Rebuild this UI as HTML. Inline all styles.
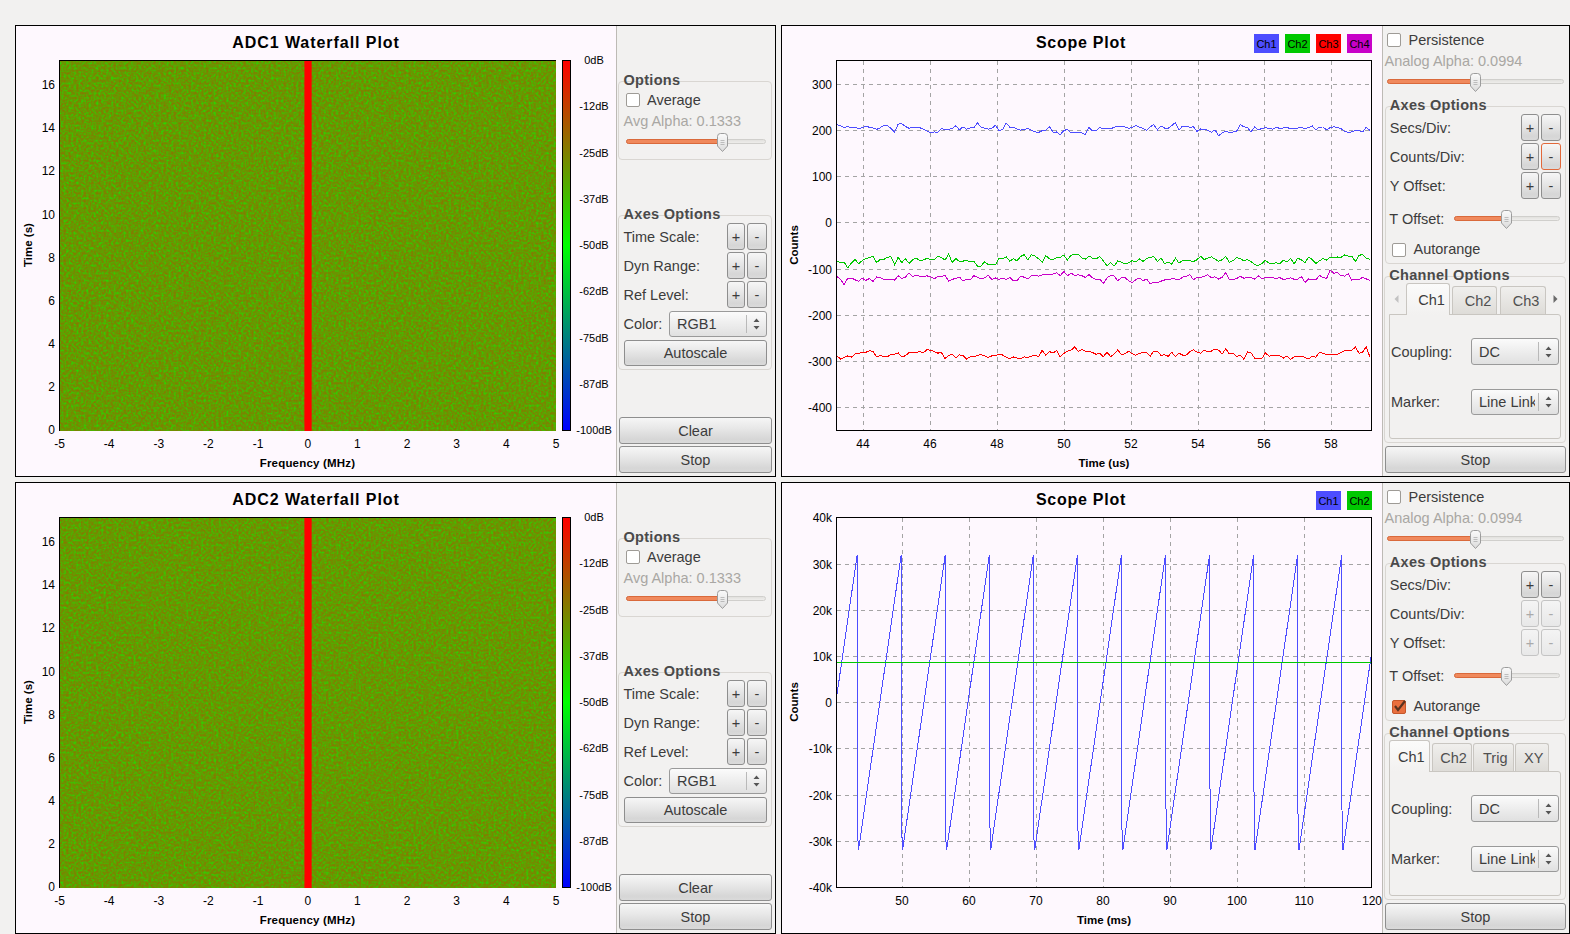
<!DOCTYPE html><html><head><meta charset="utf-8"><style>
html,body{margin:0;padding:0;}
body{width:1570px;height:934px;background:#f2f1f0;position:relative;overflow:hidden;font-family:"Liberation Sans", sans-serif;}
.t{position:absolute;height:40px;line-height:40px;white-space:pre;font-family:"Liberation Sans", sans-serif;}
</style></head><body>
<div style="position:absolute;left:15px;top:25px;width:761px;height:452px;border:1px solid #000;background:#fef8fe;box-sizing:border-box;"></div>
<div class="t" style="left:-184px;width:1000px;text-align:center;top:22.799999999999997px;font-size:16px;font-weight:bold;color:#000;letter-spacing:0.95px;">ADC1 Waterfall Plot</div>
<svg style="position:absolute;left:59px;top:60px" width="497" height="371"><defs><filter id="nz0" x="0" y="0" width="100%" height="100%" color-interpolation-filters="sRGB"><feTurbulence type="fractalNoise" baseFrequency="0.4" numOctaves="3" seed="3"/><feComponentTransfer><feFuncR type="table" tableValues="0.45 0.46 0.48 0.51 0.55 0.60 0.66 0.73 0.80 0.86 0.9"/></feComponentTransfer><feColorMatrix type="matrix" values="-1 0 0 0 1  1 0 0 0 0  0 0 0 0 0  0 0 0 0 1"/></filter></defs><rect width="497" height="371" fill="#6f9a00" filter="url(#nz0)"/></svg>
<div style="position:absolute;left:59px;top:60px;width:1px;height:371px;background:#000;"></div>
<div style="position:absolute;left:59px;top:60px;width:497px;height:1px;background:#000;"></div>
<div style="position:absolute;left:305px;top:61px;width:6px;height:370px;background:#ff0000;"></div>
<div style="position:absolute;left:304px;top:61px;width:1px;height:370px;background:rgba(255,0,0,0.6);"></div>
<div style="position:absolute;left:311px;top:61px;width:1px;height:370px;background:rgba(255,0,0,0.65);"></div>
<div style="position:absolute;left:562px;top:60px;width:9px;height:371px;border:1px solid #000;box-sizing:border-box;background:linear-gradient(#f00,#0f0 50%,#00f);"></div>
<div class="t" style="left:94px;width:1000px;text-align:center;top:40.0px;font-size:11px;font-weight:normal;color:#000;">0dB</div>
<div class="t" style="left:94px;width:1000px;text-align:center;top:86.25px;font-size:11px;font-weight:normal;color:#000;">-12dB</div>
<div class="t" style="left:94px;width:1000px;text-align:center;top:132.5px;font-size:11px;font-weight:normal;color:#000;">-25dB</div>
<div class="t" style="left:94px;width:1000px;text-align:center;top:178.75px;font-size:11px;font-weight:normal;color:#000;">-37dB</div>
<div class="t" style="left:94px;width:1000px;text-align:center;top:225.0px;font-size:11px;font-weight:normal;color:#000;">-50dB</div>
<div class="t" style="left:94px;width:1000px;text-align:center;top:271.25px;font-size:11px;font-weight:normal;color:#000;">-62dB</div>
<div class="t" style="left:94px;width:1000px;text-align:center;top:317.5px;font-size:11px;font-weight:normal;color:#000;">-75dB</div>
<div class="t" style="left:94px;width:1000px;text-align:center;top:363.75px;font-size:11px;font-weight:normal;color:#000;">-87dB</div>
<div class="t" style="left:94px;width:1000px;text-align:center;top:410.0px;font-size:11px;font-weight:normal;color:#000;">-100dB</div>
<div class="t" style="left:-945px;width:1000px;text-align:right;top:410.0px;font-size:12px;font-weight:normal;color:#000;">0</div>
<div class="t" style="left:-945px;width:1000px;text-align:right;top:366.9px;font-size:12px;font-weight:normal;color:#000;">2</div>
<div class="t" style="left:-945px;width:1000px;text-align:right;top:323.8px;font-size:12px;font-weight:normal;color:#000;">4</div>
<div class="t" style="left:-945px;width:1000px;text-align:right;top:280.7px;font-size:12px;font-weight:normal;color:#000;">6</div>
<div class="t" style="left:-945px;width:1000px;text-align:right;top:237.60000000000002px;font-size:12px;font-weight:normal;color:#000;">8</div>
<div class="t" style="left:-945px;width:1000px;text-align:right;top:194.5px;font-size:12px;font-weight:normal;color:#000;">10</div>
<div class="t" style="left:-945px;width:1000px;text-align:right;top:151.39999999999998px;font-size:12px;font-weight:normal;color:#000;">12</div>
<div class="t" style="left:-945px;width:1000px;text-align:right;top:108.30000000000001px;font-size:12px;font-weight:normal;color:#000;">14</div>
<div class="t" style="left:-945px;width:1000px;text-align:right;top:65.19999999999999px;font-size:12px;font-weight:normal;color:#000;">16</div>
<div class="t" style="left:-440.5px;width:1000px;text-align:center;top:424.0px;font-size:12px;font-weight:normal;color:#000;">-5</div>
<div class="t" style="left:-390.85px;width:1000px;text-align:center;top:424.0px;font-size:12px;font-weight:normal;color:#000;">-4</div>
<div class="t" style="left:-341.2px;width:1000px;text-align:center;top:424.0px;font-size:12px;font-weight:normal;color:#000;">-3</div>
<div class="t" style="left:-291.55px;width:1000px;text-align:center;top:424.0px;font-size:12px;font-weight:normal;color:#000;">-2</div>
<div class="t" style="left:-241.89999999999998px;width:1000px;text-align:center;top:424.0px;font-size:12px;font-weight:normal;color:#000;">-1</div>
<div class="t" style="left:-192.25px;width:1000px;text-align:center;top:424.0px;font-size:12px;font-weight:normal;color:#000;">0</div>
<div class="t" style="left:-142.60000000000002px;width:1000px;text-align:center;top:424.0px;font-size:12px;font-weight:normal;color:#000;">1</div>
<div class="t" style="left:-92.94999999999999px;width:1000px;text-align:center;top:424.0px;font-size:12px;font-weight:normal;color:#000;">2</div>
<div class="t" style="left:-43.30000000000001px;width:1000px;text-align:center;top:424.0px;font-size:12px;font-weight:normal;color:#000;">3</div>
<div class="t" style="left:6.349999999999966px;width:1000px;text-align:center;top:424.0px;font-size:12px;font-weight:normal;color:#000;">4</div>
<div class="t" style="left:56.0px;width:1000px;text-align:center;top:424.0px;font-size:12px;font-weight:normal;color:#000;">5</div>
<div class="t" style="left:-192.5px;width:1000px;text-align:center;top:443.0px;font-size:11.5px;font-weight:bold;color:#000;letter-spacing:0.2px;">Frequency (MHz)</div>
<div class="t" style="left:-472px;width:1000px;text-align:center;top:225.0px;font-size:11.5px;font-weight:bold;color:#000;transform:rotate(-90deg);">Time (s)</div>
<div style="position:absolute;left:616px;top:26px;width:159px;height:450px;background:#f2f1f0;border-left:1px solid #bdbab5;box-sizing:border-box;"></div>
<div style="position:absolute;left:618px;top:81px;width:152px;height:77px;border:1px solid #d9d6d2;border-radius:4px;"></div>
<div class="t" style="left:623.5px;top:60.0px;font-size:14.5px;font-weight:bold;color:#4a4a4a;letter-spacing:0.3px;">Options</div>
<div style="position:absolute;left:626px;top:93px;width:12px;height:12px;border:1px solid #9e9b96;border-radius:2px;background:#fff;"></div>
<div class="t" style="left:647px;top:80.0px;font-size:14.5px;font-weight:normal;color:#3c3c3c;">Average</div>
<div class="t" style="left:623.5px;top:101.0px;font-size:14.5px;font-weight:normal;color:#a9a7a3;">Avg Alpha: 0.1333</div>
<div style="position:absolute;left:626px;top:139px;width:138px;height:3px;border:1px solid #d0cfcc;border-radius:3px;background:linear-gradient(#e2e1de,#eeedeb);"></div>
<div style="position:absolute;left:626px;top:139px;width:93.5px;height:3px;border:1px solid #d9693b;border-radius:3px;background:#f0895c;"></div>
<svg style="position:absolute;left:715.5px;top:132px" width="13" height="21"><defs><linearGradient id="hg" x1="0" y1="0" x2="0" y2="1"><stop offset="0" stop-color="#fafafa"/><stop offset="1" stop-color="#dcdcdc"/></linearGradient></defs><path d="M1.5 4.5 Q1.5 1.5 4.5 1.5 L8.5 1.5 Q11.5 1.5 11.5 4.5 L11.5 14 L6.5 19.5 L1.5 14 Z" fill="url(#hg)" stroke="#9c9c9c"/><path d="M4.5 8.5h4M4.5 10.5h4M4.5 12.5h4" stroke="#a8a8a8" stroke-width="0.7"/></svg>
<div style="position:absolute;left:618px;top:215px;width:152px;height:153px;border:1px solid #d9d6d2;border-radius:4px;"></div>
<div class="t" style="left:623.5px;top:194.0px;font-size:14.5px;font-weight:bold;color:#4a4a4a;letter-spacing:0.3px;">Axes Options</div>
<div class="t" style="left:623.5px;top:216.5px;font-size:14.5px;font-weight:normal;color:#3c3c3c;">Time Scale:</div>
<div style="position:absolute;left:727px;top:223.0px;width:16px;height:25px;border:1px solid #8e8e8e;border-radius:3px;background:linear-gradient(#f6f6f6,#e8e8e8 40%,#d6d6d6 85%,#dadada);"></div>
<div class="t" style="left:236.0px;width:1000px;text-align:center;top:216.5px;font-size:14.5px;font-weight:normal;color:#3c3c3c;">+</div>
<div style="position:absolute;left:747px;top:223.0px;width:18px;height:25px;border:1px solid #8e8e8e;border-radius:3px;background:linear-gradient(#f6f6f6,#e8e8e8 40%,#d6d6d6 85%,#dadada);"></div>
<div class="t" style="left:257.0px;width:1000px;text-align:center;top:216.5px;font-size:14.5px;font-weight:normal;color:#3c3c3c;">-</div>
<div class="t" style="left:623.5px;top:245.7px;font-size:14.5px;font-weight:normal;color:#3c3c3c;">Dyn Range:</div>
<div style="position:absolute;left:727px;top:252.2px;width:16px;height:25px;border:1px solid #8e8e8e;border-radius:3px;background:linear-gradient(#f6f6f6,#e8e8e8 40%,#d6d6d6 85%,#dadada);"></div>
<div class="t" style="left:236.0px;width:1000px;text-align:center;top:245.7px;font-size:14.5px;font-weight:normal;color:#3c3c3c;">+</div>
<div style="position:absolute;left:747px;top:252.2px;width:18px;height:25px;border:1px solid #8e8e8e;border-radius:3px;background:linear-gradient(#f6f6f6,#e8e8e8 40%,#d6d6d6 85%,#dadada);"></div>
<div class="t" style="left:257.0px;width:1000px;text-align:center;top:245.7px;font-size:14.5px;font-weight:normal;color:#3c3c3c;">-</div>
<div class="t" style="left:623.5px;top:274.9px;font-size:14.5px;font-weight:normal;color:#3c3c3c;">Ref Level:</div>
<div style="position:absolute;left:727px;top:281.4px;width:16px;height:25px;border:1px solid #8e8e8e;border-radius:3px;background:linear-gradient(#f6f6f6,#e8e8e8 40%,#d6d6d6 85%,#dadada);"></div>
<div class="t" style="left:236.0px;width:1000px;text-align:center;top:274.9px;font-size:14.5px;font-weight:normal;color:#3c3c3c;">+</div>
<div style="position:absolute;left:747px;top:281.4px;width:18px;height:25px;border:1px solid #8e8e8e;border-radius:3px;background:linear-gradient(#f6f6f6,#e8e8e8 40%,#d6d6d6 85%,#dadada);"></div>
<div class="t" style="left:257.0px;width:1000px;text-align:center;top:274.9px;font-size:14.5px;font-weight:normal;color:#3c3c3c;">-</div>
<div class="t" style="left:623.5px;top:303.6px;font-size:14.5px;font-weight:normal;color:#3c3c3c;">Color:</div>
<div style="position:absolute;left:669px;top:311px;width:96px;height:24px;border:1px solid #9a9a9a;border-radius:3px;background:linear-gradient(#fbfbfb,#f0f0f0 40%,#e0e0e0);"></div>
<div class="t" style="left:677px;top:303.6px;font-size:14.5px;font-weight:normal;color:#3c3c3c;">RGB1</div>
<div style="position:absolute;left:746px;top:315px;width:1px;height:18px;background:#b9b9b9;"></div>
<svg style="position:absolute;left:753px;top:316.0px" width="10" height="16"><path d="M0.5 6 L3.5 2.5 L6.5 6 Z M0.5 10 L3.5 13.5 L6.5 10 Z" fill="#555"/></svg>
<div style="position:absolute;left:624px;top:340px;width:141px;height:24px;border:1px solid #8e8e8e;border-radius:3px;background:linear-gradient(#f6f6f6,#e8e8e8 40%,#d6d6d6 85%,#dadada);"></div>
<div class="t" style="left:195.5px;width:1000px;text-align:center;top:333.0px;font-size:14.5px;font-weight:normal;color:#3c3c3c;">Autoscale</div>
<div style="position:absolute;left:619px;top:417px;width:151px;height:25px;border:1px solid #8e8e8e;border-radius:3px;background:linear-gradient(#f6f6f6,#e8e8e8 40%,#d6d6d6 85%,#dadada);"></div>
<div class="t" style="left:195.5px;width:1000px;text-align:center;top:410.5px;font-size:14.5px;font-weight:normal;color:#3c3c3c;">Clear</div>
<div style="position:absolute;left:619px;top:446px;width:151px;height:25px;border:1px solid #8e8e8e;border-radius:3px;background:linear-gradient(#f6f6f6,#e8e8e8 40%,#d6d6d6 85%,#dadada);"></div>
<div class="t" style="left:195.5px;width:1000px;text-align:center;top:439.5px;font-size:14.5px;font-weight:normal;color:#3c3c3c;">Stop</div>
<div style="position:absolute;left:775px;top:25px;width:1px;height:452px;background:#000;"></div>
<div style="position:absolute;left:15px;top:482px;width:761px;height:452px;border:1px solid #000;background:#fef8fe;box-sizing:border-box;"></div>
<div class="t" style="left:-184px;width:1000px;text-align:center;top:479.8px;font-size:16px;font-weight:bold;color:#000;letter-spacing:0.95px;">ADC2 Waterfall Plot</div>
<svg style="position:absolute;left:59px;top:517px" width="497" height="371"><defs><filter id="nz457" x="0" y="0" width="100%" height="100%" color-interpolation-filters="sRGB"><feTurbulence type="fractalNoise" baseFrequency="0.4" numOctaves="3" seed="460"/><feComponentTransfer><feFuncR type="table" tableValues="0.45 0.46 0.48 0.51 0.55 0.60 0.66 0.73 0.80 0.86 0.9"/></feComponentTransfer><feColorMatrix type="matrix" values="-1 0 0 0 1  1 0 0 0 0  0 0 0 0 0  0 0 0 0 1"/></filter></defs><rect width="497" height="371" fill="#6f9a00" filter="url(#nz457)"/></svg>
<div style="position:absolute;left:59px;top:517px;width:1px;height:371px;background:#000;"></div>
<div style="position:absolute;left:59px;top:517px;width:497px;height:1px;background:#000;"></div>
<div style="position:absolute;left:305px;top:518px;width:6px;height:370px;background:#ff0000;"></div>
<div style="position:absolute;left:304px;top:518px;width:1px;height:370px;background:rgba(255,0,0,0.6);"></div>
<div style="position:absolute;left:311px;top:518px;width:1px;height:370px;background:rgba(255,0,0,0.65);"></div>
<div style="position:absolute;left:562px;top:517px;width:9px;height:371px;border:1px solid #000;box-sizing:border-box;background:linear-gradient(#f00,#0f0 50%,#00f);"></div>
<div class="t" style="left:94px;width:1000px;text-align:center;top:497.0px;font-size:11px;font-weight:normal;color:#000;">0dB</div>
<div class="t" style="left:94px;width:1000px;text-align:center;top:543.25px;font-size:11px;font-weight:normal;color:#000;">-12dB</div>
<div class="t" style="left:94px;width:1000px;text-align:center;top:589.5px;font-size:11px;font-weight:normal;color:#000;">-25dB</div>
<div class="t" style="left:94px;width:1000px;text-align:center;top:635.75px;font-size:11px;font-weight:normal;color:#000;">-37dB</div>
<div class="t" style="left:94px;width:1000px;text-align:center;top:682.0px;font-size:11px;font-weight:normal;color:#000;">-50dB</div>
<div class="t" style="left:94px;width:1000px;text-align:center;top:728.25px;font-size:11px;font-weight:normal;color:#000;">-62dB</div>
<div class="t" style="left:94px;width:1000px;text-align:center;top:774.5px;font-size:11px;font-weight:normal;color:#000;">-75dB</div>
<div class="t" style="left:94px;width:1000px;text-align:center;top:820.75px;font-size:11px;font-weight:normal;color:#000;">-87dB</div>
<div class="t" style="left:94px;width:1000px;text-align:center;top:867.0px;font-size:11px;font-weight:normal;color:#000;">-100dB</div>
<div class="t" style="left:-945px;width:1000px;text-align:right;top:867.0px;font-size:12px;font-weight:normal;color:#000;">0</div>
<div class="t" style="left:-945px;width:1000px;text-align:right;top:823.9px;font-size:12px;font-weight:normal;color:#000;">2</div>
<div class="t" style="left:-945px;width:1000px;text-align:right;top:780.8px;font-size:12px;font-weight:normal;color:#000;">4</div>
<div class="t" style="left:-945px;width:1000px;text-align:right;top:737.7px;font-size:12px;font-weight:normal;color:#000;">6</div>
<div class="t" style="left:-945px;width:1000px;text-align:right;top:694.6px;font-size:12px;font-weight:normal;color:#000;">8</div>
<div class="t" style="left:-945px;width:1000px;text-align:right;top:651.5px;font-size:12px;font-weight:normal;color:#000;">10</div>
<div class="t" style="left:-945px;width:1000px;text-align:right;top:608.4px;font-size:12px;font-weight:normal;color:#000;">12</div>
<div class="t" style="left:-945px;width:1000px;text-align:right;top:565.3px;font-size:12px;font-weight:normal;color:#000;">14</div>
<div class="t" style="left:-945px;width:1000px;text-align:right;top:522.2px;font-size:12px;font-weight:normal;color:#000;">16</div>
<div class="t" style="left:-440.5px;width:1000px;text-align:center;top:881.0px;font-size:12px;font-weight:normal;color:#000;">-5</div>
<div class="t" style="left:-390.85px;width:1000px;text-align:center;top:881.0px;font-size:12px;font-weight:normal;color:#000;">-4</div>
<div class="t" style="left:-341.2px;width:1000px;text-align:center;top:881.0px;font-size:12px;font-weight:normal;color:#000;">-3</div>
<div class="t" style="left:-291.55px;width:1000px;text-align:center;top:881.0px;font-size:12px;font-weight:normal;color:#000;">-2</div>
<div class="t" style="left:-241.89999999999998px;width:1000px;text-align:center;top:881.0px;font-size:12px;font-weight:normal;color:#000;">-1</div>
<div class="t" style="left:-192.25px;width:1000px;text-align:center;top:881.0px;font-size:12px;font-weight:normal;color:#000;">0</div>
<div class="t" style="left:-142.60000000000002px;width:1000px;text-align:center;top:881.0px;font-size:12px;font-weight:normal;color:#000;">1</div>
<div class="t" style="left:-92.94999999999999px;width:1000px;text-align:center;top:881.0px;font-size:12px;font-weight:normal;color:#000;">2</div>
<div class="t" style="left:-43.30000000000001px;width:1000px;text-align:center;top:881.0px;font-size:12px;font-weight:normal;color:#000;">3</div>
<div class="t" style="left:6.349999999999966px;width:1000px;text-align:center;top:881.0px;font-size:12px;font-weight:normal;color:#000;">4</div>
<div class="t" style="left:56.0px;width:1000px;text-align:center;top:881.0px;font-size:12px;font-weight:normal;color:#000;">5</div>
<div class="t" style="left:-192.5px;width:1000px;text-align:center;top:900.0px;font-size:11.5px;font-weight:bold;color:#000;letter-spacing:0.2px;">Frequency (MHz)</div>
<div class="t" style="left:-472px;width:1000px;text-align:center;top:682.0px;font-size:11.5px;font-weight:bold;color:#000;transform:rotate(-90deg);">Time (s)</div>
<div style="position:absolute;left:616px;top:483px;width:159px;height:450px;background:#f2f1f0;border-left:1px solid #bdbab5;box-sizing:border-box;"></div>
<div style="position:absolute;left:618px;top:538px;width:152px;height:77px;border:1px solid #d9d6d2;border-radius:4px;"></div>
<div class="t" style="left:623.5px;top:517.0px;font-size:14.5px;font-weight:bold;color:#4a4a4a;letter-spacing:0.3px;">Options</div>
<div style="position:absolute;left:626px;top:550px;width:12px;height:12px;border:1px solid #9e9b96;border-radius:2px;background:#fff;"></div>
<div class="t" style="left:647px;top:537.0px;font-size:14.5px;font-weight:normal;color:#3c3c3c;">Average</div>
<div class="t" style="left:623.5px;top:558.0px;font-size:14.5px;font-weight:normal;color:#a9a7a3;">Avg Alpha: 0.1333</div>
<div style="position:absolute;left:626px;top:596px;width:138px;height:3px;border:1px solid #d0cfcc;border-radius:3px;background:linear-gradient(#e2e1de,#eeedeb);"></div>
<div style="position:absolute;left:626px;top:596px;width:93.5px;height:3px;border:1px solid #d9693b;border-radius:3px;background:#f0895c;"></div>
<svg style="position:absolute;left:715.5px;top:589px" width="13" height="21"><defs><linearGradient id="hg" x1="0" y1="0" x2="0" y2="1"><stop offset="0" stop-color="#fafafa"/><stop offset="1" stop-color="#dcdcdc"/></linearGradient></defs><path d="M1.5 4.5 Q1.5 1.5 4.5 1.5 L8.5 1.5 Q11.5 1.5 11.5 4.5 L11.5 14 L6.5 19.5 L1.5 14 Z" fill="url(#hg)" stroke="#9c9c9c"/><path d="M4.5 8.5h4M4.5 10.5h4M4.5 12.5h4" stroke="#a8a8a8" stroke-width="0.7"/></svg>
<div style="position:absolute;left:618px;top:672px;width:152px;height:153px;border:1px solid #d9d6d2;border-radius:4px;"></div>
<div class="t" style="left:623.5px;top:651.0px;font-size:14.5px;font-weight:bold;color:#4a4a4a;letter-spacing:0.3px;">Axes Options</div>
<div class="t" style="left:623.5px;top:673.5px;font-size:14.5px;font-weight:normal;color:#3c3c3c;">Time Scale:</div>
<div style="position:absolute;left:727px;top:680.0px;width:16px;height:25px;border:1px solid #8e8e8e;border-radius:3px;background:linear-gradient(#f6f6f6,#e8e8e8 40%,#d6d6d6 85%,#dadada);"></div>
<div class="t" style="left:236.0px;width:1000px;text-align:center;top:673.5px;font-size:14.5px;font-weight:normal;color:#3c3c3c;">+</div>
<div style="position:absolute;left:747px;top:680.0px;width:18px;height:25px;border:1px solid #8e8e8e;border-radius:3px;background:linear-gradient(#f6f6f6,#e8e8e8 40%,#d6d6d6 85%,#dadada);"></div>
<div class="t" style="left:257.0px;width:1000px;text-align:center;top:673.5px;font-size:14.5px;font-weight:normal;color:#3c3c3c;">-</div>
<div class="t" style="left:623.5px;top:702.7px;font-size:14.5px;font-weight:normal;color:#3c3c3c;">Dyn Range:</div>
<div style="position:absolute;left:727px;top:709.2px;width:16px;height:25px;border:1px solid #8e8e8e;border-radius:3px;background:linear-gradient(#f6f6f6,#e8e8e8 40%,#d6d6d6 85%,#dadada);"></div>
<div class="t" style="left:236.0px;width:1000px;text-align:center;top:702.7px;font-size:14.5px;font-weight:normal;color:#3c3c3c;">+</div>
<div style="position:absolute;left:747px;top:709.2px;width:18px;height:25px;border:1px solid #8e8e8e;border-radius:3px;background:linear-gradient(#f6f6f6,#e8e8e8 40%,#d6d6d6 85%,#dadada);"></div>
<div class="t" style="left:257.0px;width:1000px;text-align:center;top:702.7px;font-size:14.5px;font-weight:normal;color:#3c3c3c;">-</div>
<div class="t" style="left:623.5px;top:731.9px;font-size:14.5px;font-weight:normal;color:#3c3c3c;">Ref Level:</div>
<div style="position:absolute;left:727px;top:738.4px;width:16px;height:25px;border:1px solid #8e8e8e;border-radius:3px;background:linear-gradient(#f6f6f6,#e8e8e8 40%,#d6d6d6 85%,#dadada);"></div>
<div class="t" style="left:236.0px;width:1000px;text-align:center;top:731.9px;font-size:14.5px;font-weight:normal;color:#3c3c3c;">+</div>
<div style="position:absolute;left:747px;top:738.4px;width:18px;height:25px;border:1px solid #8e8e8e;border-radius:3px;background:linear-gradient(#f6f6f6,#e8e8e8 40%,#d6d6d6 85%,#dadada);"></div>
<div class="t" style="left:257.0px;width:1000px;text-align:center;top:731.9px;font-size:14.5px;font-weight:normal;color:#3c3c3c;">-</div>
<div class="t" style="left:623.5px;top:760.6px;font-size:14.5px;font-weight:normal;color:#3c3c3c;">Color:</div>
<div style="position:absolute;left:669px;top:768px;width:96px;height:24px;border:1px solid #9a9a9a;border-radius:3px;background:linear-gradient(#fbfbfb,#f0f0f0 40%,#e0e0e0);"></div>
<div class="t" style="left:677px;top:760.6px;font-size:14.5px;font-weight:normal;color:#3c3c3c;">RGB1</div>
<div style="position:absolute;left:746px;top:772px;width:1px;height:18px;background:#b9b9b9;"></div>
<svg style="position:absolute;left:753px;top:773.0px" width="10" height="16"><path d="M0.5 6 L3.5 2.5 L6.5 6 Z M0.5 10 L3.5 13.5 L6.5 10 Z" fill="#555"/></svg>
<div style="position:absolute;left:624px;top:797px;width:141px;height:24px;border:1px solid #8e8e8e;border-radius:3px;background:linear-gradient(#f6f6f6,#e8e8e8 40%,#d6d6d6 85%,#dadada);"></div>
<div class="t" style="left:195.5px;width:1000px;text-align:center;top:790.0px;font-size:14.5px;font-weight:normal;color:#3c3c3c;">Autoscale</div>
<div style="position:absolute;left:619px;top:874px;width:151px;height:25px;border:1px solid #8e8e8e;border-radius:3px;background:linear-gradient(#f6f6f6,#e8e8e8 40%,#d6d6d6 85%,#dadada);"></div>
<div class="t" style="left:195.5px;width:1000px;text-align:center;top:867.5px;font-size:14.5px;font-weight:normal;color:#3c3c3c;">Clear</div>
<div style="position:absolute;left:619px;top:903px;width:151px;height:25px;border:1px solid #8e8e8e;border-radius:3px;background:linear-gradient(#f6f6f6,#e8e8e8 40%,#d6d6d6 85%,#dadada);"></div>
<div class="t" style="left:195.5px;width:1000px;text-align:center;top:896.5px;font-size:14.5px;font-weight:normal;color:#3c3c3c;">Stop</div>
<div style="position:absolute;left:775px;top:482px;width:1px;height:452px;background:#000;"></div>
<div style="position:absolute;left:781px;top:25px;width:789px;height:452px;border:1px solid #000;border-right:none;background:#fef8fe;box-sizing:border-box;"></div>
<div class="t" style="left:581px;width:1000px;text-align:center;top:22.799999999999997px;font-size:16px;font-weight:bold;color:#000;letter-spacing:0.75px;">Scope Plot</div>
<div style="position:absolute;left:1254px;top:34px;width:25px;height:19px;background:#4d4dff;"></div>
<div class="t" style="left:766.5px;width:1000px;text-align:center;top:23.5px;font-size:11px;font-weight:normal;color:#000;">Ch1</div>
<div style="position:absolute;left:1285px;top:34px;width:25px;height:19px;background:#00c800;"></div>
<div class="t" style="left:797.5px;width:1000px;text-align:center;top:23.5px;font-size:11px;font-weight:normal;color:#000;">Ch2</div>
<div style="position:absolute;left:1316px;top:34px;width:25px;height:19px;background:#ff0000;"></div>
<div class="t" style="left:828.5px;width:1000px;text-align:center;top:23.5px;font-size:11px;font-weight:normal;color:#000;">Ch3</div>
<div style="position:absolute;left:1347px;top:34px;width:25px;height:19px;background:#c800c8;"></div>
<div class="t" style="left:859.5px;width:1000px;text-align:center;top:23.5px;font-size:11px;font-weight:normal;color:#000;">Ch4</div>
<svg style="position:absolute;left:0;top:0" width="1570" height="934"><line x1="863.5" y1="61" x2="863.5" y2="430" stroke="#a4a4a4" stroke-dasharray="4 4" shape-rendering="crispEdges"/><line x1="930.5" y1="61" x2="930.5" y2="430" stroke="#a4a4a4" stroke-dasharray="4 4" shape-rendering="crispEdges"/><line x1="997.5" y1="61" x2="997.5" y2="430" stroke="#a4a4a4" stroke-dasharray="4 4" shape-rendering="crispEdges"/><line x1="1064.5" y1="61" x2="1064.5" y2="430" stroke="#a4a4a4" stroke-dasharray="4 4" shape-rendering="crispEdges"/><line x1="1131.5" y1="61" x2="1131.5" y2="430" stroke="#a4a4a4" stroke-dasharray="4 4" shape-rendering="crispEdges"/><line x1="1198.5" y1="61" x2="1198.5" y2="430" stroke="#a4a4a4" stroke-dasharray="4 4" shape-rendering="crispEdges"/><line x1="1264.5" y1="61" x2="1264.5" y2="430" stroke="#a4a4a4" stroke-dasharray="4 4" shape-rendering="crispEdges"/><line x1="1331.5" y1="61" x2="1331.5" y2="430" stroke="#a4a4a4" stroke-dasharray="4 4" shape-rendering="crispEdges"/><line x1="837" y1="84.5" x2="1371" y2="84.5" stroke="#a4a4a4" stroke-dasharray="4 4" shape-rendering="crispEdges"/><line x1="837" y1="130.5" x2="1371" y2="130.5" stroke="#a4a4a4" stroke-dasharray="4 4" shape-rendering="crispEdges"/><line x1="837" y1="176.5" x2="1371" y2="176.5" stroke="#a4a4a4" stroke-dasharray="4 4" shape-rendering="crispEdges"/><line x1="837" y1="222.5" x2="1371" y2="222.5" stroke="#a4a4a4" stroke-dasharray="4 4" shape-rendering="crispEdges"/><line x1="837" y1="269.5" x2="1371" y2="269.5" stroke="#a4a4a4" stroke-dasharray="4 4" shape-rendering="crispEdges"/><line x1="837" y1="315.5" x2="1371" y2="315.5" stroke="#a4a4a4" stroke-dasharray="4 4" shape-rendering="crispEdges"/><line x1="837" y1="361.5" x2="1371" y2="361.5" stroke="#a4a4a4" stroke-dasharray="4 4" shape-rendering="crispEdges"/><line x1="837" y1="407.5" x2="1371" y2="407.5" stroke="#a4a4a4" stroke-dasharray="4 4" shape-rendering="crispEdges"/><polyline points="837.0,124.8 840.6,125.8 844.2,127.4 847.8,126.5 851.4,127.8 855.0,127.5 858.6,128.5 862.2,127.7 865.8,126.4 869.4,127.2 873.0,127.9 876.6,129.4 880.2,127.8 883.8,125.3 887.4,125.4 891.0,128.6 894.6,132.1 898.2,124.1 901.8,123.6 905.4,126.5 909.0,128.2 912.6,127.1 916.2,127.3 919.8,127.8 923.4,129.0 927.0,131.1 930.6,132.8 934.2,131.9 937.8,132.3 941.4,128.5 945.0,129.5 948.6,129.5 952.2,128.5 955.8,125.8 959.4,129.9 963.0,126.9 966.6,129.2 970.2,128.0 973.8,127.7 977.4,123.0 981.0,127.0 984.6,128.1 988.2,129.2 991.8,128.4 995.4,125.3 999.0,130.4 1002.6,129.7 1006.2,123.0 1009.8,127.2 1013.4,127.4 1017.0,128.9 1020.6,130.1 1024.2,129.4 1027.8,128.6 1031.4,130.3 1035.0,131.7 1038.6,132.5 1042.2,130.7 1045.8,130.4 1049.4,126.5 1053.0,132.2 1056.6,132.0 1060.2,134.8 1063.8,130.4 1067.4,129.6 1071.0,132.9 1074.6,132.7 1078.2,132.9 1081.8,133.0 1085.4,134.6 1089.0,127.4 1092.6,130.9 1096.2,130.5 1099.8,127.4 1103.4,129.0 1107.0,128.6 1110.6,129.0 1114.2,127.1 1117.8,126.7 1121.4,126.6 1125.0,127.0 1128.6,128.3 1132.2,127.3 1135.8,125.4 1139.4,127.1 1143.0,128.3 1146.6,130.2 1150.2,126.8 1153.8,124.7 1157.4,129.9 1161.0,126.0 1164.6,128.1 1168.2,128.3 1171.8,125.5 1175.4,122.6 1179.0,130.0 1182.6,126.0 1186.2,126.0 1189.8,127.4 1193.4,126.6 1197.0,131.4 1200.6,129.0 1204.2,129.8 1207.8,130.1 1211.4,132.4 1215.0,129.8 1218.6,135.6 1222.2,132.9 1225.8,131.4 1229.4,132.5 1233.0,132.0 1236.6,131.4 1240.2,124.6 1243.8,126.9 1247.4,127.3 1251.0,132.0 1254.6,127.1 1258.2,129.7 1261.8,128.6 1265.4,127.5 1269.0,128.8 1272.6,129.1 1276.2,127.5 1279.8,128.3 1283.4,128.0 1287.0,127.4 1290.6,128.9 1294.2,128.8 1297.8,128.0 1301.4,127.6 1305.0,128.4 1308.6,127.6 1312.2,125.9 1315.8,129.9 1319.4,127.1 1323.0,127.0 1326.6,129.8 1330.2,127.6 1333.8,126.8 1337.4,127.5 1341.0,128.5 1344.6,131.4 1348.2,132.5 1351.8,131.8 1355.4,130.4 1359.0,130.7 1362.6,131.9 1366.2,127.3 1369.8,130.4" fill="none" stroke="#4d4dff" stroke-width="1" shape-rendering="crispEdges"/><polyline points="837.0,261.5 840.6,262.6 844.2,262.4 847.8,267.9 851.4,263.0 855.0,259.5 858.6,263.6 862.2,260.8 865.8,258.2 869.4,257.9 873.0,256.2 876.6,262.5 880.2,259.5 883.8,259.4 887.4,257.4 891.0,256.6 894.6,264.7 898.2,257.2 901.8,262.7 905.4,258.6 909.0,263.3 912.6,260.0 916.2,257.9 919.8,260.7 923.4,259.9 927.0,258.4 930.6,259.6 934.2,259.9 937.8,256.4 941.4,257.4 945.0,260.2 948.6,254.1 952.2,262.4 955.8,258.5 959.4,261.4 963.0,261.1 966.6,260.4 970.2,261.8 973.8,261.3 977.4,266.1 981.0,266.1 984.6,261.6 988.2,264.7 991.8,264.4 995.4,264.8 999.0,258.5 1002.6,259.0 1006.2,256.8 1009.8,261.3 1013.4,258.8 1017.0,260.8 1020.6,256.5 1024.2,254.7 1027.8,259.8 1031.4,254.8 1035.0,256.1 1038.6,258.7 1042.2,262.5 1045.8,255.6 1049.4,258.8 1053.0,259.8 1056.6,257.7 1060.2,257.5 1063.8,255.0 1067.4,260.0 1071.0,255.3 1074.6,254.4 1078.2,254.5 1081.8,257.9 1085.4,259.3 1089.0,255.9 1092.6,258.3 1096.2,258.8 1099.8,256.7 1103.4,260.9 1107.0,265.8 1110.6,262.4 1114.2,266.0 1117.8,260.8 1121.4,262.0 1125.0,264.0 1128.6,262.7 1132.2,260.7 1135.8,261.9 1139.4,258.9 1143.0,261.3 1146.6,258.6 1150.2,257.3 1153.8,256.8 1157.4,261.3 1161.0,258.0 1164.6,263.8 1168.2,262.2 1171.8,264.2 1175.4,258.1 1179.0,263.0 1182.6,260.6 1186.2,261.0 1189.8,260.6 1193.4,261.6 1197.0,259.7 1200.6,256.2 1204.2,259.5 1207.8,258.1 1211.4,256.8 1215.0,259.1 1218.6,261.2 1222.2,259.7 1225.8,256.4 1229.4,262.4 1233.0,260.6 1236.6,257.7 1240.2,258.7 1243.8,260.8 1247.4,259.7 1251.0,261.4 1254.6,264.6 1258.2,265.5 1261.8,263.6 1265.4,260.3 1269.0,263.1 1272.6,263.4 1276.2,262.7 1279.8,263.7 1283.4,260.3 1287.0,262.0 1290.6,258.4 1294.2,263.8 1297.8,258.0 1301.4,260.0 1305.0,262.7 1308.6,257.2 1312.2,259.4 1315.8,263.6 1319.4,260.9 1323.0,258.5 1326.6,260.0 1330.2,257.3 1333.8,257.1 1337.4,257.0 1341.0,257.4 1344.6,255.0 1348.2,256.1 1351.8,256.3 1355.4,261.5 1359.0,255.3 1362.6,254.6 1366.2,258.3 1369.8,259.1" fill="none" stroke="#00c800" stroke-width="1" shape-rendering="crispEdges"/><polyline points="837.0,276.7 840.6,279.2 844.2,284.8 847.8,278.0 851.4,278.0 855.0,279.8 858.6,281.3 862.2,278.2 865.8,280.3 869.4,278.6 873.0,281.4 876.6,277.0 880.2,277.4 883.8,279.6 887.4,280.0 891.0,279.1 894.6,280.2 898.2,275.7 901.8,278.4 905.4,277.2 909.0,273.0 912.6,276.7 916.2,275.2 919.8,276.3 923.4,276.3 927.0,275.9 930.6,276.6 934.2,278.9 937.8,276.3 941.4,276.7 945.0,275.4 948.6,281.1 952.2,279.4 955.8,278.3 959.4,277.1 963.0,280.7 966.6,279.5 970.2,279.8 973.8,275.7 977.4,277.3 981.0,279.0 984.6,277.8 988.2,275.4 991.8,279.3 995.4,278.0 999.0,279.3 1002.6,278.2 1006.2,279.5 1009.8,277.5 1013.4,280.8 1017.0,280.4 1020.6,276.6 1024.2,277.1 1027.8,278.8 1031.4,275.8 1035.0,275.2 1038.6,276.3 1042.2,274.8 1045.8,274.9 1049.4,274.3 1053.0,274.1 1056.6,272.8 1060.2,275.7 1063.8,271.4 1067.4,275.7 1071.0,273.1 1074.6,275.2 1078.2,274.9 1081.8,275.6 1085.4,277.4 1089.0,274.7 1092.6,278.0 1096.2,279.8 1099.8,279.1 1103.4,283.4 1107.0,277.9 1110.6,275.5 1114.2,276.1 1117.8,280.7 1121.4,277.6 1125.0,277.7 1128.6,280.7 1132.2,282.4 1135.8,279.7 1139.4,278.1 1143.0,280.6 1146.6,279.1 1150.2,283.7 1153.8,282.4 1157.4,282.6 1161.0,281.2 1164.6,280.0 1168.2,279.5 1171.8,278.9 1175.4,279.0 1179.0,279.9 1182.6,277.2 1186.2,276.3 1189.8,274.4 1193.4,279.8 1197.0,277.0 1200.6,277.6 1204.2,276.2 1207.8,274.7 1211.4,277.9 1215.0,276.8 1218.6,279.0 1222.2,277.2 1225.8,272.6 1229.4,279.5 1233.0,279.7 1236.6,278.6 1240.2,276.3 1243.8,278.2 1247.4,277.7 1251.0,277.4 1254.6,279.1 1258.2,275.7 1261.8,278.7 1265.4,277.4 1269.0,277.8 1272.6,277.9 1276.2,278.3 1279.8,277.7 1283.4,279.5 1287.0,278.9 1290.6,277.7 1294.2,279.3 1297.8,279.1 1301.4,276.5 1305.0,282.3 1308.6,279.0 1312.2,279.6 1315.8,280.0 1319.4,275.2 1323.0,277.6 1326.6,278.5 1330.2,270.1 1333.8,273.3 1337.4,272.5 1341.0,275.7 1344.6,276.1 1348.2,273.7 1351.8,280.1 1355.4,279.2 1359.0,279.6 1362.6,277.2 1366.2,278.9 1369.8,280.5" fill="none" stroke="#c800c8" stroke-width="1" shape-rendering="crispEdges"/><polyline points="837.0,355.9 840.6,359.1 844.2,357.2 847.8,355.9 851.4,357.2 855.0,354.0 858.6,353.4 862.2,352.5 865.8,352.3 869.4,350.7 873.0,351.6 876.6,356.9 880.2,355.4 883.8,356.6 887.4,356.7 891.0,354.6 894.6,354.2 898.2,352.9 901.8,356.9 905.4,355.7 909.0,352.7 912.6,352.6 916.2,352.4 919.8,351.5 923.4,352.7 927.0,349.6 930.6,350.4 934.2,351.5 937.8,353.1 941.4,352.6 945.0,358.5 948.6,355.6 952.2,354.1 955.8,357.9 959.4,354.9 963.0,355.4 966.6,358.9 970.2,356.7 973.8,356.9 977.4,355.2 981.0,354.8 984.6,356.0 988.2,357.5 991.8,355.9 995.4,355.7 999.0,354.0 1002.6,355.0 1006.2,357.3 1009.8,358.8 1013.4,357.0 1017.0,358.0 1020.6,358.9 1024.2,356.9 1027.8,357.6 1031.4,356.2 1035.0,355.1 1038.6,356.6 1042.2,350.3 1045.8,355.2 1049.4,351.6 1053.0,353.0 1056.6,350.4 1060.2,357.1 1063.8,353.4 1067.4,351.1 1071.0,350.3 1074.6,346.8 1078.2,351.3 1081.8,349.6 1085.4,351.1 1089.0,351.2 1092.6,352.5 1096.2,354.3 1099.8,353.2 1103.4,356.7 1107.0,352.1 1110.6,356.6 1114.2,353.9 1117.8,349.9 1121.4,354.5 1125.0,353.8 1128.6,351.3 1132.2,353.6 1135.8,355.3 1139.4,353.2 1143.0,352.7 1146.6,352.7 1150.2,356.1 1153.8,351.2 1157.4,351.6 1161.0,355.3 1164.6,354.8 1168.2,356.3 1171.8,352.3 1175.4,356.5 1179.0,353.2 1182.6,355.1 1186.2,355.1 1189.8,351.6 1193.4,349.8 1197.0,352.2 1200.6,353.2 1204.2,350.0 1207.8,351.7 1211.4,351.1 1215.0,348.9 1218.6,350.1 1222.2,354.0 1225.8,348.7 1229.4,354.0 1233.0,352.9 1236.6,356.3 1240.2,355.4 1243.8,359.1 1247.4,351.9 1251.0,352.8 1254.6,358.1 1258.2,358.6 1261.8,358.7 1265.4,352.8 1269.0,356.2 1272.6,355.4 1276.2,356.0 1279.8,355.8 1283.4,358.1 1287.0,356.1 1290.6,359.4 1294.2,356.9 1297.8,356.3 1301.4,356.1 1305.0,357.5 1308.6,358.8 1312.2,356.3 1315.8,357.1 1319.4,352.3 1323.0,353.3 1326.6,354.4 1330.2,354.5 1333.8,354.3 1337.4,354.2 1341.0,352.6 1344.6,350.9 1348.2,350.3 1351.8,350.2 1355.4,347.2 1359.0,353.3 1362.6,352.1 1366.2,346.7 1369.8,356.7" fill="none" stroke="#ff0000" stroke-width="1" shape-rendering="crispEdges"/><rect x="836.5" y="60.5" width="535" height="370" fill="none" stroke="#000"/></svg>
<div class="t" style="left:363px;width:1000px;text-align:center;top:424.0px;font-size:12px;font-weight:normal;color:#000;">44</div>
<div class="t" style="left:430px;width:1000px;text-align:center;top:424.0px;font-size:12px;font-weight:normal;color:#000;">46</div>
<div class="t" style="left:497px;width:1000px;text-align:center;top:424.0px;font-size:12px;font-weight:normal;color:#000;">48</div>
<div class="t" style="left:564px;width:1000px;text-align:center;top:424.0px;font-size:12px;font-weight:normal;color:#000;">50</div>
<div class="t" style="left:631px;width:1000px;text-align:center;top:424.0px;font-size:12px;font-weight:normal;color:#000;">52</div>
<div class="t" style="left:698px;width:1000px;text-align:center;top:424.0px;font-size:12px;font-weight:normal;color:#000;">54</div>
<div class="t" style="left:764px;width:1000px;text-align:center;top:424.0px;font-size:12px;font-weight:normal;color:#000;">56</div>
<div class="t" style="left:831px;width:1000px;text-align:center;top:424.0px;font-size:12px;font-weight:normal;color:#000;">58</div>
<div class="t" style="left:-168px;width:1000px;text-align:right;top:64.5px;font-size:12px;font-weight:normal;color:#000;">300</div>
<div class="t" style="left:-168px;width:1000px;text-align:right;top:110.5px;font-size:12px;font-weight:normal;color:#000;">200</div>
<div class="t" style="left:-168px;width:1000px;text-align:right;top:156.5px;font-size:12px;font-weight:normal;color:#000;">100</div>
<div class="t" style="left:-168px;width:1000px;text-align:right;top:202.5px;font-size:12px;font-weight:normal;color:#000;">0</div>
<div class="t" style="left:-168px;width:1000px;text-align:right;top:249.5px;font-size:12px;font-weight:normal;color:#000;">-100</div>
<div class="t" style="left:-168px;width:1000px;text-align:right;top:295.5px;font-size:12px;font-weight:normal;color:#000;">-200</div>
<div class="t" style="left:-168px;width:1000px;text-align:right;top:341.5px;font-size:12px;font-weight:normal;color:#000;">-300</div>
<div class="t" style="left:-168px;width:1000px;text-align:right;top:387.5px;font-size:12px;font-weight:normal;color:#000;">-400</div>
<div class="t" style="left:604px;width:1000px;text-align:center;top:443.0px;font-size:11.5px;font-weight:bold;color:#000;">Time (us)</div>
<div class="t" style="left:293.5px;width:1000px;text-align:center;top:225.0px;font-size:11.5px;font-weight:bold;color:#000;transform:rotate(-90deg);">Counts</div>
<div style="position:absolute;left:1382px;top:26px;width:187px;height:450px;background:#f2f1f0;border-left:1px solid #bdbab5;box-sizing:border-box;"></div>
<div style="position:absolute;left:1387px;top:33px;width:12px;height:12px;border:1px solid #9e9b96;border-radius:2px;background:#fff;"></div>
<div class="t" style="left:1408.5px;top:19.799999999999997px;font-size:14.5px;font-weight:normal;color:#3c3c3c;">Persistence</div>
<div class="t" style="left:1384.5px;top:41.0px;font-size:14.5px;font-weight:normal;color:#a9a7a3;">Analog Alpha: 0.0994</div>
<div style="position:absolute;left:1387px;top:79px;width:175px;height:3px;border:1px solid #d0cfcc;border-radius:3px;background:linear-gradient(#e2e1de,#eeedeb);"></div>
<div style="position:absolute;left:1387px;top:79px;width:85.5px;height:3px;border:1px solid #d9693b;border-radius:3px;background:#f0895c;"></div>
<svg style="position:absolute;left:1468.5px;top:72px" width="13" height="21"><defs><linearGradient id="hg" x1="0" y1="0" x2="0" y2="1"><stop offset="0" stop-color="#fafafa"/><stop offset="1" stop-color="#dcdcdc"/></linearGradient></defs><path d="M1.5 4.5 Q1.5 1.5 4.5 1.5 L8.5 1.5 Q11.5 1.5 11.5 4.5 L11.5 14 L6.5 19.5 L1.5 14 Z" fill="url(#hg)" stroke="#9c9c9c"/><path d="M4.5 8.5h4M4.5 10.5h4M4.5 12.5h4" stroke="#a8a8a8" stroke-width="0.7"/></svg>
<div style="position:absolute;left:1385px;top:106px;width:179px;height:156px;border:1px solid #d9d6d2;border-radius:4px;"></div>
<div class="t" style="left:1389.8px;top:84.8px;font-size:14.5px;font-weight:bold;color:#4a4a4a;letter-spacing:0.3px;">Axes Options</div>
<div class="t" style="left:1389.8px;top:108.0px;font-size:14.5px;font-weight:normal;color:#3c3c3c;">Secs/Div:</div>
<div style="position:absolute;left:1521px;top:114.0px;width:16px;height:25px;border:1px solid #8e8e8e;border-radius:3px;background:linear-gradient(#f6f6f6,#e8e8e8 40%,#d6d6d6 85%,#dadada);"></div>
<div class="t" style="left:1030.0px;width:1000px;text-align:center;top:107.5px;font-size:14.5px;font-weight:normal;color:#3c3c3c;">+</div>
<div style="position:absolute;left:1541px;top:114.0px;width:18px;height:25px;border:1px solid #8e8e8e;border-radius:3px;background:linear-gradient(#f6f6f6,#e8e8e8 40%,#d6d6d6 85%,#dadada);"></div>
<div class="t" style="left:1051.0px;width:1000px;text-align:center;top:107.5px;font-size:14.5px;font-weight:normal;color:#3c3c3c;">-</div>
<div class="t" style="left:1389.8px;top:137.2px;font-size:14.5px;font-weight:normal;color:#3c3c3c;">Counts/Div:</div>
<div style="position:absolute;left:1521px;top:143.2px;width:16px;height:25px;border:1px solid #8e8e8e;border-radius:3px;background:linear-gradient(#f6f6f6,#e8e8e8 40%,#d6d6d6 85%,#dadada);"></div>
<div class="t" style="left:1030.0px;width:1000px;text-align:center;top:136.7px;font-size:14.5px;font-weight:normal;color:#3c3c3c;">+</div>
<div style="position:absolute;left:1541px;top:143.2px;width:18px;height:25px;border:1px solid #e2683a;border-radius:3px;background:linear-gradient(#f6f6f6,#e8e8e8 40%,#d6d6d6 85%,#dadada);"></div>
<div class="t" style="left:1051.0px;width:1000px;text-align:center;top:136.7px;font-size:14.5px;font-weight:normal;color:#3c3c3c;">-</div>
<div class="t" style="left:1389.8px;top:166.4px;font-size:14.5px;font-weight:normal;color:#3c3c3c;">Y Offset:</div>
<div style="position:absolute;left:1521px;top:172.4px;width:16px;height:25px;border:1px solid #8e8e8e;border-radius:3px;background:linear-gradient(#f6f6f6,#e8e8e8 40%,#d6d6d6 85%,#dadada);"></div>
<div class="t" style="left:1030.0px;width:1000px;text-align:center;top:165.9px;font-size:14.5px;font-weight:normal;color:#3c3c3c;">+</div>
<div style="position:absolute;left:1541px;top:172.4px;width:18px;height:25px;border:1px solid #8e8e8e;border-radius:3px;background:linear-gradient(#f6f6f6,#e8e8e8 40%,#d6d6d6 85%,#dadada);"></div>
<div class="t" style="left:1051.0px;width:1000px;text-align:center;top:165.9px;font-size:14.5px;font-weight:normal;color:#3c3c3c;">-</div>
<div class="t" style="left:1389.3px;top:198.9px;font-size:14.5px;font-weight:normal;color:#3c3c3c;">T Offset:</div>
<div style="position:absolute;left:1454px;top:215.5px;width:103.5px;height:3px;border:1px solid #d0cfcc;border-radius:3px;background:linear-gradient(#e2e1de,#eeedeb);"></div>
<div style="position:absolute;left:1454px;top:215.5px;width:49.5px;height:3px;border:1px solid #d9693b;border-radius:3px;background:#f0895c;"></div>
<svg style="position:absolute;left:1499.5px;top:208.5px" width="13" height="21"><defs><linearGradient id="hg" x1="0" y1="0" x2="0" y2="1"><stop offset="0" stop-color="#fafafa"/><stop offset="1" stop-color="#dcdcdc"/></linearGradient></defs><path d="M1.5 4.5 Q1.5 1.5 4.5 1.5 L8.5 1.5 Q11.5 1.5 11.5 4.5 L11.5 14 L6.5 19.5 L1.5 14 Z" fill="url(#hg)" stroke="#9c9c9c"/><path d="M4.5 8.5h4M4.5 10.5h4M4.5 12.5h4" stroke="#a8a8a8" stroke-width="0.7"/></svg>
<div style="position:absolute;left:1392px;top:243px;width:12px;height:12px;border:1px solid #9e9b96;border-radius:2px;background:#fff;"></div>
<div class="t" style="left:1413.5px;top:229.0px;font-size:14.5px;font-weight:normal;color:#3c3c3c;">Autorange</div>
<div style="position:absolute;left:1384px;top:276px;width:180px;height:165px;border:1px solid #d9d6d2;border-radius:4px;"></div>
<div class="t" style="left:1389.3px;top:254.8px;font-size:14.5px;font-weight:bold;color:#4a4a4a;letter-spacing:0.3px;">Channel Options</div>
<div style="position:absolute;left:1389px;top:314px;width:172px;height:125px;border:1px solid #c9c6c1;border-radius:0 3px 3px 3px;background:#f2f1f0;box-sizing:border-box;"></div>
<svg style="position:absolute;left:1392px;top:292px" width="10" height="14"><path d="M6.5 3 L2.5 7 L6.5 11Z" fill="#c2c2c2"/></svg>
<svg style="position:absolute;left:1551px;top:292px" width="10" height="14"><path d="M2.5 3 L6.5 7 L2.5 11Z" fill="#6a6a6a"/></svg>
<div style="position:absolute;left:1406px;top:283px;width:44px;height:32px;border:1px solid #c9c6c1;border-bottom:none;border-radius:3px 3px 0 0;background:linear-gradient(#fbfbfa,#f2f1f0);box-sizing:border-box;"></div>
<div class="t" style="left:931.5px;width:1000px;text-align:center;top:280.2px;font-size:14.5px;font-weight:normal;color:#3c3c3c;">Ch1</div>
<div style="position:absolute;left:1452px;top:286px;width:45px;height:28px;border:1px solid #c9c6c1;border-bottom:none;border-radius:3px 3px 0 0;background:linear-gradient(#f0efed,#dedcd8);box-sizing:border-box;"></div>
<div class="t" style="left:978.0px;width:1000px;text-align:center;top:281.0px;font-size:14.5px;font-weight:normal;color:#505050;">Ch2</div>
<div style="position:absolute;left:1499.5px;top:286px;width:46.0px;height:28px;border:1px solid #c9c6c1;border-bottom:none;border-radius:3px 3px 0 0;background:linear-gradient(#f0efed,#dedcd8);box-sizing:border-box;"></div>
<div class="t" style="left:1026.0px;width:1000px;text-align:center;top:281.0px;font-size:14.5px;font-weight:normal;color:#505050;">Ch3</div>
<div class="t" style="left:1391px;top:331.5px;font-size:14.5px;font-weight:normal;color:#3c3c3c;">Coupling:</div>
<div style="position:absolute;left:1471px;top:338px;width:86px;height:25px;border:1px solid #9a9a9a;border-radius:3px;background:linear-gradient(#fbfbfb,#f0f0f0 40%,#e0e0e0);"></div>
<div class="t" style="left:1479px;top:331.8px;font-size:14.5px;font-weight:normal;color:#3c3c3c;">DC</div>
<div style="position:absolute;left:1538px;top:342px;width:1px;height:19px;background:#b9b9b9;"></div>
<svg style="position:absolute;left:1545px;top:343.5px" width="10" height="16"><path d="M0.5 6 L3.5 2.5 L6.5 6 Z M0.5 10 L3.5 13.5 L6.5 10 Z" fill="#555"/></svg>
<div class="t" style="left:1391px;top:382.0px;font-size:14.5px;font-weight:normal;color:#3c3c3c;">Marker:</div>
<div style="position:absolute;left:1471px;top:389px;width:86px;height:24px;border:1px solid #9a9a9a;border-radius:3px;background:linear-gradient(#fbfbfb,#f0f0f0 40%,#e0e0e0);"></div>
<div class="t" style="left:1479px;top:382.0px;font-size:14.5px;font-weight:normal;color:#3c3c3c;width:56px;overflow:hidden;">Line Link</div>
<div style="position:absolute;left:1538px;top:393px;width:1px;height:18px;background:#b9b9b9;"></div>
<svg style="position:absolute;left:1545px;top:394.0px" width="10" height="16"><path d="M0.5 6 L3.5 2.5 L6.5 6 Z M0.5 10 L3.5 13.5 L6.5 10 Z" fill="#555"/></svg>
<div style="position:absolute;left:1385px;top:446px;width:179px;height:25px;border:1px solid #8e8e8e;border-radius:3px;background:linear-gradient(#f6f6f6,#e8e8e8 40%,#d6d6d6 85%,#dadada);"></div>
<div class="t" style="left:975.5px;width:1000px;text-align:center;top:439.5px;font-size:14.5px;font-weight:normal;color:#3c3c3c;">Stop</div>
<div style="position:absolute;left:1569px;top:25px;width:1px;height:452px;background:#000;"></div>
<div style="position:absolute;left:781px;top:482px;width:789px;height:452px;border:1px solid #000;border-right:none;background:#fef8fe;box-sizing:border-box;"></div>
<div class="t" style="left:581px;width:1000px;text-align:center;top:479.8px;font-size:16px;font-weight:bold;color:#000;letter-spacing:0.75px;">Scope Plot</div>
<div style="position:absolute;left:1316px;top:491px;width:25px;height:19px;background:#4d4dff;"></div>
<div class="t" style="left:828.5px;width:1000px;text-align:center;top:480.5px;font-size:11px;font-weight:normal;color:#000;">Ch1</div>
<div style="position:absolute;left:1347px;top:491px;width:25px;height:19px;background:#00c800;"></div>
<div class="t" style="left:859.5px;width:1000px;text-align:center;top:480.5px;font-size:11px;font-weight:normal;color:#000;">Ch2</div>
<svg style="position:absolute;left:0;top:0" width="1570" height="934"><line x1="902.5" y1="518" x2="902.5" y2="887" stroke="#a4a4a4" stroke-dasharray="4 4" shape-rendering="crispEdges"/><line x1="969.5" y1="518" x2="969.5" y2="887" stroke="#a4a4a4" stroke-dasharray="4 4" shape-rendering="crispEdges"/><line x1="1036.5" y1="518" x2="1036.5" y2="887" stroke="#a4a4a4" stroke-dasharray="4 4" shape-rendering="crispEdges"/><line x1="1103.5" y1="518" x2="1103.5" y2="887" stroke="#a4a4a4" stroke-dasharray="4 4" shape-rendering="crispEdges"/><line x1="1170.5" y1="518" x2="1170.5" y2="887" stroke="#a4a4a4" stroke-dasharray="4 4" shape-rendering="crispEdges"/><line x1="1237.5" y1="518" x2="1237.5" y2="887" stroke="#a4a4a4" stroke-dasharray="4 4" shape-rendering="crispEdges"/><line x1="1304.5" y1="518" x2="1304.5" y2="887" stroke="#a4a4a4" stroke-dasharray="4 4" shape-rendering="crispEdges"/><line x1="837" y1="564.5" x2="1371" y2="564.5" stroke="#a4a4a4" stroke-dasharray="4 4" shape-rendering="crispEdges"/><line x1="837" y1="610.5" x2="1371" y2="610.5" stroke="#a4a4a4" stroke-dasharray="4 4" shape-rendering="crispEdges"/><line x1="837" y1="656.5" x2="1371" y2="656.5" stroke="#a4a4a4" stroke-dasharray="4 4" shape-rendering="crispEdges"/><line x1="837" y1="702.5" x2="1371" y2="702.5" stroke="#a4a4a4" stroke-dasharray="4 4" shape-rendering="crispEdges"/><line x1="837" y1="748.5" x2="1371" y2="748.5" stroke="#a4a4a4" stroke-dasharray="4 4" shape-rendering="crispEdges"/><line x1="837" y1="795.5" x2="1371" y2="795.5" stroke="#a4a4a4" stroke-dasharray="4 4" shape-rendering="crispEdges"/><line x1="837" y1="841.5" x2="1371" y2="841.5" stroke="#a4a4a4" stroke-dasharray="4 4" shape-rendering="crispEdges"/><clipPath id="cp457"><rect x="837" y="518" width="534" height="369"/></clipPath><polyline clip-path="url(#cp457)" points="770.4,850.0 813.2,554.6 813.4,807.5 814.5,850.0 857.2,554.6 857.4,830.4 858.5,850.0 901.2,554.6 901.5,826.5 902.6,850.0 945.3,554.6 945.5,834.1 946.6,850.0 989.4,554.6 989.6,815.5 990.7,850.0 1033.4,554.6 1033.6,834.0 1034.7,850.0 1077.5,554.6 1077.7,823.1 1078.8,850.0 1121.5,554.6 1121.7,821.7 1122.8,850.0 1165.5,554.6 1165.8,798.7 1166.8,850.0 1209.6,554.6 1209.8,775.2 1210.9,850.0 1253.7,554.6 1253.9,785.4 1255.0,850.0 1297.7,554.6 1297.9,810.3 1299.0,850.0 1341.8,554.6 1342.0,810.2 1343.0,850.0 1385.8,554.6 1386.0,802.0" fill="none" stroke="#4d4dff" stroke-width="1" shape-rendering="crispEdges"/><line x1="837" y1="662.5" x2="1371" y2="662.5" stroke="#00c800" stroke-width="1"/><rect x="836.5" y="517.5" width="535" height="370" fill="none" stroke="#000"/></svg>
<div class="t" style="left:402px;width:1000px;text-align:center;top:881.0px;font-size:12px;font-weight:normal;color:#000;">50</div>
<div class="t" style="left:469px;width:1000px;text-align:center;top:881.0px;font-size:12px;font-weight:normal;color:#000;">60</div>
<div class="t" style="left:536px;width:1000px;text-align:center;top:881.0px;font-size:12px;font-weight:normal;color:#000;">70</div>
<div class="t" style="left:603px;width:1000px;text-align:center;top:881.0px;font-size:12px;font-weight:normal;color:#000;">80</div>
<div class="t" style="left:670px;width:1000px;text-align:center;top:881.0px;font-size:12px;font-weight:normal;color:#000;">90</div>
<div class="t" style="left:737px;width:1000px;text-align:center;top:881.0px;font-size:12px;font-weight:normal;color:#000;">100</div>
<div class="t" style="left:804px;width:1000px;text-align:center;top:881.0px;font-size:12px;font-weight:normal;color:#000;">110</div>
<div class="t" style="left:-168px;width:1000px;text-align:right;top:497.5px;font-size:12px;font-weight:normal;color:#000;">40k</div>
<div class="t" style="left:-168px;width:1000px;text-align:right;top:544.5px;font-size:12px;font-weight:normal;color:#000;">30k</div>
<div class="t" style="left:-168px;width:1000px;text-align:right;top:590.5px;font-size:12px;font-weight:normal;color:#000;">20k</div>
<div class="t" style="left:-168px;width:1000px;text-align:right;top:636.5px;font-size:12px;font-weight:normal;color:#000;">10k</div>
<div class="t" style="left:-168px;width:1000px;text-align:right;top:682.5px;font-size:12px;font-weight:normal;color:#000;">0</div>
<div class="t" style="left:-168px;width:1000px;text-align:right;top:728.5px;font-size:12px;font-weight:normal;color:#000;">-10k</div>
<div class="t" style="left:-168px;width:1000px;text-align:right;top:775.5px;font-size:12px;font-weight:normal;color:#000;">-20k</div>
<div class="t" style="left:-168px;width:1000px;text-align:right;top:821.5px;font-size:12px;font-weight:normal;color:#000;">-30k</div>
<div class="t" style="left:-168px;width:1000px;text-align:right;top:867.5px;font-size:12px;font-weight:normal;color:#000;">-40k</div>
<div class="t" style="left:872px;width:1000px;text-align:center;top:881.0px;font-size:12px;font-weight:normal;color:#000;">120</div>
<div class="t" style="left:604px;width:1000px;text-align:center;top:900.0px;font-size:11.5px;font-weight:bold;color:#000;">Time (ms)</div>
<div class="t" style="left:293.5px;width:1000px;text-align:center;top:682.0px;font-size:11.5px;font-weight:bold;color:#000;transform:rotate(-90deg);">Counts</div>
<div style="position:absolute;left:1382px;top:483px;width:187px;height:450px;background:#f2f1f0;border-left:1px solid #bdbab5;box-sizing:border-box;"></div>
<div style="position:absolute;left:1387px;top:490px;width:12px;height:12px;border:1px solid #9e9b96;border-radius:2px;background:#fff;"></div>
<div class="t" style="left:1408.5px;top:476.8px;font-size:14.5px;font-weight:normal;color:#3c3c3c;">Persistence</div>
<div class="t" style="left:1384.5px;top:498.0px;font-size:14.5px;font-weight:normal;color:#a9a7a3;">Analog Alpha: 0.0994</div>
<div style="position:absolute;left:1387px;top:536px;width:175px;height:3px;border:1px solid #d0cfcc;border-radius:3px;background:linear-gradient(#e2e1de,#eeedeb);"></div>
<div style="position:absolute;left:1387px;top:536px;width:85.5px;height:3px;border:1px solid #d9693b;border-radius:3px;background:#f0895c;"></div>
<svg style="position:absolute;left:1468.5px;top:529px" width="13" height="21"><defs><linearGradient id="hg" x1="0" y1="0" x2="0" y2="1"><stop offset="0" stop-color="#fafafa"/><stop offset="1" stop-color="#dcdcdc"/></linearGradient></defs><path d="M1.5 4.5 Q1.5 1.5 4.5 1.5 L8.5 1.5 Q11.5 1.5 11.5 4.5 L11.5 14 L6.5 19.5 L1.5 14 Z" fill="url(#hg)" stroke="#9c9c9c"/><path d="M4.5 8.5h4M4.5 10.5h4M4.5 12.5h4" stroke="#a8a8a8" stroke-width="0.7"/></svg>
<div style="position:absolute;left:1385px;top:563px;width:179px;height:156px;border:1px solid #d9d6d2;border-radius:4px;"></div>
<div class="t" style="left:1389.8px;top:541.8px;font-size:14.5px;font-weight:bold;color:#4a4a4a;letter-spacing:0.3px;">Axes Options</div>
<div class="t" style="left:1389.8px;top:565.0px;font-size:14.5px;font-weight:normal;color:#3c3c3c;">Secs/Div:</div>
<div style="position:absolute;left:1521px;top:571.0px;width:16px;height:25px;border:1px solid #8e8e8e;border-radius:3px;background:linear-gradient(#f6f6f6,#e8e8e8 40%,#d6d6d6 85%,#dadada);"></div>
<div class="t" style="left:1030.0px;width:1000px;text-align:center;top:564.5px;font-size:14.5px;font-weight:normal;color:#3c3c3c;">+</div>
<div style="position:absolute;left:1541px;top:571.0px;width:18px;height:25px;border:1px solid #8e8e8e;border-radius:3px;background:linear-gradient(#f6f6f6,#e8e8e8 40%,#d6d6d6 85%,#dadada);"></div>
<div class="t" style="left:1051.0px;width:1000px;text-align:center;top:564.5px;font-size:14.5px;font-weight:normal;color:#3c3c3c;">-</div>
<div class="t" style="left:1389.8px;top:594.2px;font-size:14.5px;font-weight:normal;color:#3c3c3c;">Counts/Div:</div>
<div style="position:absolute;left:1521px;top:600.2px;width:16px;height:25px;border:1px solid #c4c4c4;border-radius:3px;background:linear-gradient(#f4f4f4,#e8e8e8);"></div>
<div class="t" style="left:1030.0px;width:1000px;text-align:center;top:593.7px;font-size:14.5px;font-weight:normal;color:#aaaaaa;">+</div>
<div style="position:absolute;left:1541px;top:600.2px;width:18px;height:25px;border:1px solid #c4c4c4;border-radius:3px;background:linear-gradient(#f4f4f4,#e8e8e8);"></div>
<div class="t" style="left:1051.0px;width:1000px;text-align:center;top:593.7px;font-size:14.5px;font-weight:normal;color:#aaaaaa;">-</div>
<div class="t" style="left:1389.8px;top:623.4px;font-size:14.5px;font-weight:normal;color:#3c3c3c;">Y Offset:</div>
<div style="position:absolute;left:1521px;top:629.4px;width:16px;height:25px;border:1px solid #c4c4c4;border-radius:3px;background:linear-gradient(#f4f4f4,#e8e8e8);"></div>
<div class="t" style="left:1030.0px;width:1000px;text-align:center;top:622.9px;font-size:14.5px;font-weight:normal;color:#aaaaaa;">+</div>
<div style="position:absolute;left:1541px;top:629.4px;width:18px;height:25px;border:1px solid #c4c4c4;border-radius:3px;background:linear-gradient(#f4f4f4,#e8e8e8);"></div>
<div class="t" style="left:1051.0px;width:1000px;text-align:center;top:622.9px;font-size:14.5px;font-weight:normal;color:#aaaaaa;">-</div>
<div class="t" style="left:1389.3px;top:655.9px;font-size:14.5px;font-weight:normal;color:#3c3c3c;">T Offset:</div>
<div style="position:absolute;left:1454px;top:672.5px;width:103.5px;height:3px;border:1px solid #d0cfcc;border-radius:3px;background:linear-gradient(#e2e1de,#eeedeb);"></div>
<div style="position:absolute;left:1454px;top:672.5px;width:49.5px;height:3px;border:1px solid #d9693b;border-radius:3px;background:#f0895c;"></div>
<svg style="position:absolute;left:1499.5px;top:665.5px" width="13" height="21"><defs><linearGradient id="hg" x1="0" y1="0" x2="0" y2="1"><stop offset="0" stop-color="#fafafa"/><stop offset="1" stop-color="#dcdcdc"/></linearGradient></defs><path d="M1.5 4.5 Q1.5 1.5 4.5 1.5 L8.5 1.5 Q11.5 1.5 11.5 4.5 L11.5 14 L6.5 19.5 L1.5 14 Z" fill="url(#hg)" stroke="#9c9c9c"/><path d="M4.5 8.5h4M4.5 10.5h4M4.5 12.5h4" stroke="#a8a8a8" stroke-width="0.7"/></svg>
<div style="position:absolute;left:1392px;top:700px;width:12px;height:12px;border:1px solid #c4572b;border-radius:2px;background:#e96f3e;"></div>
<svg style="position:absolute;left:1392px;top:698px" width="16" height="16"><path d="M3 8 L6 12 L13 3" stroke="#5a3320" stroke-width="2.2" fill="none"/></svg>
<div class="t" style="left:1413.5px;top:686.0px;font-size:14.5px;font-weight:normal;color:#3c3c3c;">Autorange</div>
<div style="position:absolute;left:1384px;top:733px;width:180px;height:165px;border:1px solid #d9d6d2;border-radius:4px;"></div>
<div class="t" style="left:1389.3px;top:711.8px;font-size:14.5px;font-weight:bold;color:#4a4a4a;letter-spacing:0.3px;">Channel Options</div>
<div style="position:absolute;left:1389px;top:771px;width:172px;height:125px;border:1px solid #c9c6c1;border-radius:0 3px 3px 3px;background:#f2f1f0;box-sizing:border-box;"></div>
<div style="position:absolute;left:1389px;top:740px;width:40.5px;height:32px;border:1px solid #c9c6c1;border-bottom:none;border-radius:3px 3px 0 0;background:linear-gradient(#fbfbfa,#f2f1f0);box-sizing:border-box;"></div>
<div class="t" style="left:911.25px;width:1000px;text-align:center;top:737.2px;font-size:14.5px;font-weight:normal;color:#3c3c3c;">Ch1</div>
<div style="position:absolute;left:1431.5px;top:743px;width:40.0px;height:28px;border:1px solid #c9c6c1;border-bottom:none;border-radius:3px 3px 0 0;background:linear-gradient(#f0efed,#dedcd8);box-sizing:border-box;"></div>
<div class="t" style="left:953.5px;width:1000px;text-align:center;top:738.0px;font-size:14.5px;font-weight:normal;color:#505050;">Ch2</div>
<div style="position:absolute;left:1473px;top:743px;width:40.5px;height:28px;border:1px solid #c9c6c1;border-bottom:none;border-radius:3px 3px 0 0;background:linear-gradient(#f0efed,#dedcd8);box-sizing:border-box;"></div>
<div class="t" style="left:995.25px;width:1000px;text-align:center;top:738.0px;font-size:14.5px;font-weight:normal;color:#505050;">Trig</div>
<div style="position:absolute;left:1515px;top:743px;width:33.5px;height:28px;border:1px solid #c9c6c1;border-bottom:none;border-radius:3px 3px 0 0;background:linear-gradient(#f0efed,#dedcd8);box-sizing:border-box;"></div>
<div class="t" style="left:1033.75px;width:1000px;text-align:center;top:738.0px;font-size:14.5px;font-weight:normal;color:#505050;">XY</div>
<div class="t" style="left:1391px;top:788.5px;font-size:14.5px;font-weight:normal;color:#3c3c3c;">Coupling:</div>
<div style="position:absolute;left:1471px;top:795px;width:86px;height:25px;border:1px solid #9a9a9a;border-radius:3px;background:linear-gradient(#fbfbfb,#f0f0f0 40%,#e0e0e0);"></div>
<div class="t" style="left:1479px;top:788.8px;font-size:14.5px;font-weight:normal;color:#3c3c3c;">DC</div>
<div style="position:absolute;left:1538px;top:799px;width:1px;height:19px;background:#b9b9b9;"></div>
<svg style="position:absolute;left:1545px;top:800.5px" width="10" height="16"><path d="M0.5 6 L3.5 2.5 L6.5 6 Z M0.5 10 L3.5 13.5 L6.5 10 Z" fill="#555"/></svg>
<div class="t" style="left:1391px;top:839.0px;font-size:14.5px;font-weight:normal;color:#3c3c3c;">Marker:</div>
<div style="position:absolute;left:1471px;top:846px;width:86px;height:24px;border:1px solid #9a9a9a;border-radius:3px;background:linear-gradient(#fbfbfb,#f0f0f0 40%,#e0e0e0);"></div>
<div class="t" style="left:1479px;top:839.0px;font-size:14.5px;font-weight:normal;color:#3c3c3c;width:56px;overflow:hidden;">Line Link</div>
<div style="position:absolute;left:1538px;top:850px;width:1px;height:18px;background:#b9b9b9;"></div>
<svg style="position:absolute;left:1545px;top:851.0px" width="10" height="16"><path d="M0.5 6 L3.5 2.5 L6.5 6 Z M0.5 10 L3.5 13.5 L6.5 10 Z" fill="#555"/></svg>
<div style="position:absolute;left:1385px;top:903px;width:179px;height:25px;border:1px solid #8e8e8e;border-radius:3px;background:linear-gradient(#f6f6f6,#e8e8e8 40%,#d6d6d6 85%,#dadada);"></div>
<div class="t" style="left:975.5px;width:1000px;text-align:center;top:896.5px;font-size:14.5px;font-weight:normal;color:#3c3c3c;">Stop</div>
<div style="position:absolute;left:1569px;top:482px;width:1px;height:452px;background:#000;"></div>
</body></html>
